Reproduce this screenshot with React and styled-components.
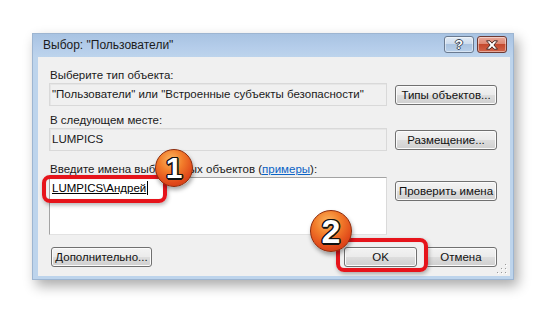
import styled, { createGlobalStyle } from "styled-components";

const GlobalStyle = createGlobalStyle`
  html, body {
    margin: 0;
    padding: 0;
    background: #ffffff;
  }
  body {
    font-family: "Liberation Sans", Arial, sans-serif;
  }
`;

const Stage = styled.div`
  position: relative;
  width: 546px;
  height: 312px;
  overflow: hidden;
  box-sizing: border-box;
  padding: 33px 0 0 32px;
  background: #ffffff;
`;

const Window = styled.div`
  width: 482px;
  height: 247px;
  box-sizing: border-box;
  display: flex;
  flex-direction: column;
  background: #bdd4ec;
  border: 1px solid #9db5d1;
  box-shadow: 4px 6px 12px rgba(0, 0, 0, 0.33);
`;

const TitleBar = styled.div`
  height: 23px;
  flex: none;
  display: flex;
  align-items: flex-start;
  padding: 0 6px 0 10px;
  background: linear-gradient(180deg, #a8c3e2 0%, #b5cdea 60%, #bdd4ec 100%);
`;

const Title = styled.div`
  flex: 1;
  font-size: 12px;
  line-height: 23px;
  color: #1b1b1b;
`;

const CaptionButton = styled.div`
  width: 30px;
  height: 17px;
  box-sizing: border-box;
  margin-top: 2px;
  margin-left: ${({ $gap }) => $gap || 0}px;
  border: 1px solid ${({ $close }) => ($close ? "#6d3a33" : "#6a7a90")};
  border-radius: 3px;
  display: flex;
  align-items: center;
  justify-content: center;
  background: ${({ $close }) =>
    $close
      ? "linear-gradient(180deg, #e9a99a 0%, #dd8873 45%, #c4492e 50%, #d2654a 100%)"
      : "linear-gradient(180deg, #e3ecf6 0%, #cddcee 45%, #aac3e0 50%, #b9d0ea 100%)"};
  box-shadow: inset 0 0 0 1px rgba(255, 255, 255, 0.45);
`;

const HelpGlyph = styled.span`
  font: 700 13px "Liberation Sans", Arial, sans-serif;
  color: #ffffff;
  line-height: 13px;
  text-shadow: -1px 0 #3a4656, 1px 0 #3a4656, 0 -1px #3a4656, 0 1px #3a4656;
`;

const Client = styled.div`
  position: relative;
  flex: 1;
  margin: 0 3px 3px 5px;
  padding: 11px 13px 0 11px;
  background: #f0f0f0;
  font-size: 11.5px;
  color: #1a1a1a;
`;

const Label = styled.div`
  height: 15px;
  line-height: 15px;
  padding-left: 1px;
  margin-top: ${({ $top }) => $top || 0}px;
  white-space: nowrap;
`;

const Link = styled.span`
  color: #0b63c6;
  text-decoration: underline;
`;

const Row = styled.div`
  display: grid;
  grid-template-columns: 338px 102px;
  column-gap: 8px;
  align-items: ${({ $top }) => ($top ? "start" : "center")};
`;

const ReadOnlyField = styled.div`
  height: 23px;
  box-sizing: border-box;
  border: 1px solid #d9d9d9;
  background: #f0f0f0;
  box-shadow: inset 1px 1px 0 #e6e6e6;
  padding-left: 2px;
  line-height: 21px;
  white-space: nowrap;
  overflow: hidden;
`;

const NamesBox = styled.div`
  height: 58px;
  box-sizing: border-box;
  background: #ffffff;
  border: 1px solid;
  border-color: #a3a3a3 #dadada #e2e2e2 #a3a3a3;
  padding: 3px 2px;
  line-height: 15px;
`;

const Resolved = styled.span`
  text-decoration: underline;
  color: #000;
`;

const Caret = styled.span`
  display: inline-block;
  width: 1px;
  height: 14px;
  background: #000;
  vertical-align: -3px;
  margin-left: 1px;
`;

const Button = styled.div`
  height: 20px;
  width: ${({ $w }) => ($w ? `${$w}px` : "auto")};
  box-sizing: border-box;
  border: 1px solid #707070;
  border-radius: 3px;
  background: linear-gradient(180deg, #f3f3f3 0%, #ebebeb 48%, #dddddd 52%, #cfcfcf 100%);
  box-shadow: inset 0 0 0 1px #fbfbfb;
  display: flex;
  align-items: center;
  justify-content: center;
  white-space: nowrap;
  color: #111;
  margin-top: ${({ $top }) => $top || 0}px;
  margin-left: ${({ $left }) => $left || 0}px;
`;

const BottomBar = styled.div`
  display: flex;
  margin-top: 12px;
`;

const Spacer = styled.div`
  flex: 1;
`;

const Grip = styled.svg`
  position: absolute;
  right: 3px;
  bottom: 2px;
`;

const Highlight = styled.div`
  position: absolute;
  left: ${({ $x }) => $x}px;
  top: ${({ $y }) => $y}px;
  width: ${({ $w }) => $w}px;
  height: ${({ $h }) => $h}px;
  box-sizing: border-box;
  border: 4px solid #e6141b;
  border-radius: 8px;
  box-shadow: 1px 2px 4px rgba(0, 0, 0, 0.3), inset 0 0 1px rgba(0, 0, 0, 0.2);
`;

const Badge = styled.div`
  position: absolute;
  left: ${({ $x }) => $x}px;
  top: ${({ $y }) => $y}px;
  width: ${({ $size }) => $size}px;
  height: ${({ $size }) => $size}px;
  box-sizing: border-box;
  border-radius: 50%;
  border: 1px solid #8c2a0a;
  background: radial-gradient(circle at 42% 28%, #fbb862 0%, #f27d2b 35%, #e0481a 70%, #c4320d 100%);
  box-shadow: 1px 3px 4px rgba(0, 0, 0, 0.35);
  display: flex;
  align-items: center;
  justify-content: center;
  font: 700 ${({ $size }) => Math.round($size * 0.8)}px "Liberation Sans", Arial, sans-serif;
  color: #ffffff;
  text-shadow: -1.5px 0 #111, 1.5px 0 #111, 0 -1.5px #111, 0 1.5px #111,
    -1px -1px #111, 1px -1px #111, -1px 1px #111, 1px 1px #111;
`;

const gripDots = [
  [8, 0],
  [8, 4],
  [4, 4],
  [8, 8],
  [4, 8],
  [0, 8],
];

export default function App() {
  return (
    <>
      <GlobalStyle />
      <Stage>
        <Window>
          <TitleBar>
            <Title>Выбор: "Пользователи"</Title>
            <CaptionButton>
              <HelpGlyph>?</HelpGlyph>
            </CaptionButton>
            <CaptionButton $close $gap={3}>
              <svg width="14" height="10" viewBox="0 0 14 10">
                <path
                  d="M1.5 0.8 H5 L7 3.2 L9 0.8 H12.5 L8.9 5 L12.5 9.2 H9 L7 6.8 L5 9.2 H1.5 L5.1 5 Z"
                  fill="#ffffff"
                  stroke="#4a2a26"
                  strokeWidth="1"
                  strokeLinejoin="round"
                />
              </svg>
            </CaptionButton>
          </TitleBar>
          <Client>
            <Label>Выберите тип объекта:</Label>
            <Row>
              <ReadOnlyField>"Пользователи" или "Встроенные субъекты безопасности"</ReadOnlyField>
              <Button>Типы объектов...</Button>
            </Row>
            <Label $top={7}>В следующем месте:</Label>
            <Row>
              <ReadOnlyField>LUMPICS</ReadOnlyField>
              <Button>Размещение...</Button>
            </Row>
            <Label $top={11}>
              Введите имена выбираемых объектов (<Link>примеры</Link>):
            </Label>
            <Row $top>
              <NamesBox>
                <Resolved>LUMPICS\Андрей</Resolved>
                <Caret />
              </NamesBox>
              <Button $top={4}>Проверить имена</Button>
            </Row>
            <BottomBar>
              <Button $w={101} $left={2}>
                Дополнительно...
              </Button>
              <Spacer />
              <Button $w={73}>OK</Button>
              <Button $w={72} $left={8}>
                Отмена
              </Button>
            </BottomBar>
            <Grip width="10" height="10" viewBox="0 0 10 10">
              {gripDots.map(([x, y]) => (
                <g key={`${x}-${y}`}>
                  <rect x={x + 1} y={y + 1} width="1" height="1" fill="#ffffff" />
                  <rect x={x} y={y} width="1" height="1" fill="#9a9a9a" />
                </g>
              ))}
            </Grip>
          </Client>
        </Window>

        <Highlight $x={42} $y={175} $w={125} $h={28} />
        <Highlight $x={336} $y={238} $w={92} $h={34} />
        <Badge $x={155} $y={149} $size={38}>1</Badge>
        <Badge $x={310} $y={210} $size={42}>2</Badge>
      </Stage>
    </>
  );
}
